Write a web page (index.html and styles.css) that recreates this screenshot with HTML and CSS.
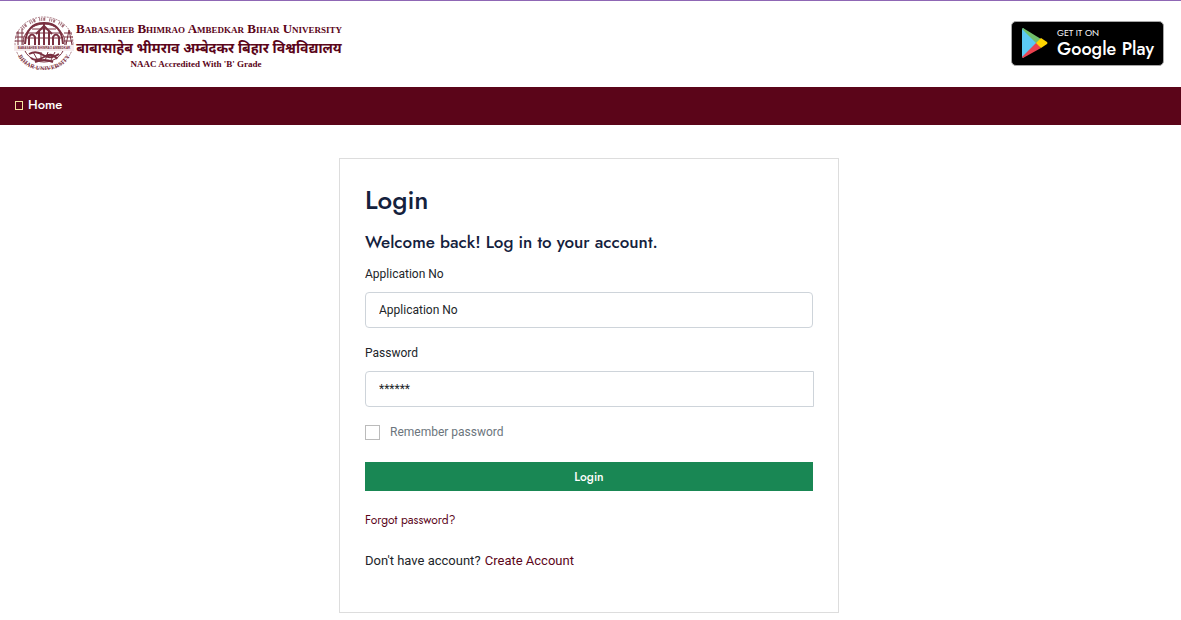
FILE: index.html
```html
<!DOCTYPE html>
<html lang="en">
<head>
    <meta charset="UTF-8">
    <meta name="viewport" content="width=device-width, initial-scale=1.0">
    <title>Login - Babasaheb Bhimrao Ambedkar Bihar University</title>
    <link rel="stylesheet" href="styles.css">
</head>
<body>
    <header class="site-header">
        <a href="#" class="brand">
            <svg class="brand-emblem" viewBox="0 0 60 54" aria-hidden="true">
                <defs>
                    <path id="ringBottom" d="M4 33 A26 20 0 0 0 56 33"/>
                </defs>
                <g fill="none" stroke="#7a3040">
                    <ellipse cx="30" cy="27" rx="29" ry="26" stroke-width="1" stroke-dasharray="2 1" opacity="0.6"/>
                    <ellipse cx="30" cy="27" rx="21" ry="19" stroke-width="1"/>
                    <path d="M11 28 C12 12 20 7 30 7 C40 7 48 12 49 28" stroke-width="2"/>
                    <path d="M14 17 L46 17 M18 13 L42 13 M13 22 L47 22" stroke-width="1"/>
                    <path d="M15 29 V21 Q18 16 21 21 V29 M39 29 V21 Q42 16 45 21 V29" stroke-width="2"/>
                    <path d="M25 29 V15 M35 29 V15 M30 8 V29 M22 18 L30 10 L38 18" stroke-width="2"/>
                    <path d="M2 17 H10 M1 21 H10 M1 25 H10 M4 15 V29 M8 13 V29" stroke-width="1"/>
                    <path d="M50 17 H58 M50 21 H59 M50 25 H59 M52 29 L55 14 L58 29" stroke-width="1"/>
                    <path d="M15 38 Q22 34 29 39 T45 38 M17 42 Q22 46 30 41 T43 43 M21 46 Q30 42 39 46" stroke-width="2"/>
                    <path d="M19 36 L23 43 M27 36 V45 M34 36 L31 45 M41 36 L37 44" stroke-width="1"/>
                </g>
                <rect x="0" y="29" width="60" height="6" fill="#f6ebed"/>
                <text class="emblem-band" x="30" y="33" text-anchor="middle">BABASAHEB BHIMRAO AMBEDKAR</text>
                <text class="emblem-ring"><textPath href="#ringBottom" startOffset="50%" text-anchor="middle" dominant-baseline="middle">BIHAR UNIVERSITY</textPath></text>
                <g fill="none" stroke="#7a3040" stroke-width="3" stroke-dasharray="1 1 1 1 2 4" opacity="0.7">
                    <path d="M8 13 A27 23 0 0 1 52 13"/>
                </g>
            </svg>
            <span class="brand-text">
                <span class="brand-name">Babasaheb Bhimrao Ambedkar Bihar University</span>
                <span class="brand-hindi" lang="hi">बाबासाहेब भीमराव अम्बेदकर बिहार विश्वविद्यालय</span>
                <span class="brand-naac">NAAC Accredited With 'B' Grade</span>
            </span>
        </a>
        <a href="#" class="play-badge">
            <svg class="play-icon" viewBox="0 0 26 30" aria-hidden="true">
                <path d="M1 0 L16 15 L1 30 Q0 29 0 28 V2 Q0 1 1 0 Z" fill="#5bc9f4"/>
                <path d="M1 0 L19 11 L15 16 L0 1 Z" fill="#71bf6b"/>
                <path d="M15 14 L19 20 L1 30 L0 29 Z" fill="#ea4250"/>
                <path d="M19 10 L25 14 Q26 15 25 16 L19 20 L14 15 Z" fill="#ffd500"/>
            </svg>
            <span class="play-text">
                <span class="play-small">GET IT ON</span>
                <span class="play-large">Google Play</span>
            </span>
        </a>
    </header>

    <nav class="main-nav">
        <a href="#" class="nav-link"><span class="nav-icon"></span>Home</a>
    </nav>

    <main class="page">
        <form class="login-card">
            <h1 class="login-title">Login</h1>
            <h2 class="login-subtitle">Welcome back! Log in to your account.</h2>

            <div class="form-group">
                <label for="applicationNo">Application No</label>
                <input type="text" id="applicationNo" class="form-control" placeholder="Application No">
            </div>

            <div class="form-group">
                <label for="password">Password</label>
                <div class="input-group">
                    <input type="password" id="password" class="form-control" placeholder="******">
                </div>
            </div>

            <div class="form-check">
                <input type="checkbox" id="remember" class="check-input">
                <label for="remember">Remember password</label>
            </div>

            <button type="button" class="btn-login">Login</button>

            <a href="#" class="forgot-link">Forgot password?</a>

            <p class="signup">Don't have account? <a href="#">Create Account</a></p>
        </form>
    </main>
</body>
</html>
```
FILE: styles.css
```css
* {
    margin: 0;
    padding: 0;
    box-sizing: border-box;
}

body {
    font-family: Roboto, sans-serif;
    font-size: 12px;
    line-height: 18px;
    color: #212529;
    background: #fff;
    border-top: 1px solid #8f67b5;
}

a {
    color: #5b0519;
    text-decoration: none;
}

/* Header */
.site-header {
    display: flex;
    justify-content: space-between;
    align-items: center;
    height: 86px;
    padding: 0 17px 2px 14px;
}

.brand {
    display: flex;
    align-items: center;
    gap: 2px;
}

.brand-emblem {
    width: 60px;
    height: 54px;
}

.emblem-band {
    font: bold 3px "Liberation Sans", sans-serif;
    fill: #7a3040;
}

.emblem-ring {
    font: bold 6px "Liberation Serif", serif;
    fill: #7a3040;
}

.brand-text {
    display: flex;
    flex-direction: column;
    align-items: center;
    white-space: nowrap;
}

.brand-name {
    font-family: "Liberation Serif", serif;
    font-size: 13px;
    font-weight: 700;
    font-variant: small-caps;
    line-height: 23px;
}

.brand-hindi {
    font-family: "Noto Sans Devanagari", "Noto Sans", sans-serif;
    font-size: 14px;
    font-weight: 700;
    line-height: 20px;
}

.brand-naac {
    padding-right: 26px;
    font-family: "Liberation Serif", serif;
    font-size: 9px;
    font-weight: 700;
    line-height: 9px;
}

.play-badge {
    display: flex;
    align-items: center;
    gap: 9px;
    height: 45px;
    padding: 0 9px 0 10px;
    background: #000;
    border: 1px solid #a6a6a6;
    border-radius: 5px;
    color: #fff;
}

.play-icon {
    width: 26px;
    height: 30px;
}

.play-text {
    display: flex;
    flex-direction: column;
    font-family: Jost, Lato, sans-serif;
}

.play-small {
    font-size: 9px;
    line-height: 12px;
}

.play-large {
    font-size: 18px;
    font-weight: 500;
    line-height: 20px;
}

/* Navigation */
.main-nav {
    display: flex;
    align-items: center;
    height: 38px;
    padding: 0 15px 2px;
    background: #5b0519;
}

.nav-link {
    display: flex;
    align-items: center;
    gap: 5px;
    font-family: Jost, Lato, sans-serif;
    font-size: 13px;
    font-weight: 500;
    color: #fff;
}

.nav-icon {
    width: 8px;
    height: 9px;
    border: 1px solid #f5e6a0;
}

/* Login form */
.page {
    padding: 33px 15px 20px 12px;
}

.login-card {
    max-width: 500px;
    margin: 0 auto;
    padding: 24px 25px 42px;
    border: 1px solid #ddd;
}

.login-title,
.login-subtitle {
    font-family: Jost, Lato, sans-serif;
    font-weight: 500;
    color: #14213d;
}

.login-title {
    font-size: 26px;
    line-height: 34px;
    margin-bottom: 13px;
}

.login-subtitle {
    font-size: 17px;
    line-height: 25px;
    margin-bottom: 10px;
}

.form-group {
    margin-bottom: 16px;
}

.form-group label {
    display: block;
    margin-bottom: 9px;
}

.form-control {
    display: block;
    width: 100%;
    height: 36px;
    padding: 0 13px;
    font: inherit;
    color: #212529;
    background: #fff;
    border: 1px solid #ced4da;
    border-radius: 4px;
}

.form-control::placeholder {
    color: #212529;
    opacity: 1;
}

.input-group {
    margin-right: -1px;
}

.input-group .form-control {
    border-radius: 4px 0 0 4px;
}

.form-check {
    display: flex;
    align-items: center;
    gap: 10px;
    margin-bottom: 21px;
    color: #6c757d;
}

.check-input {
    appearance: none;
    width: 15px;
    height: 15px;
    border: 1px solid #bbb;
}

.check-input:checked {
    background: #198754;
}

.btn-login {
    display: block;
    width: 100%;
    height: 29px;
    margin-bottom: 20px;
    font-family: Jost, Lato, sans-serif;
    font-size: 12px;
    font-weight: 500;
    color: #fff;
    background: #198754;
    border: none;
    cursor: pointer;
}

.forgot-link {
    display: block;
    margin-bottom: 23px;
    font-family: Jost, Lato, sans-serif;
}

.signup {
    font-size: 13px;
}

.signup a {
    margin-left: 1px;
}
```
